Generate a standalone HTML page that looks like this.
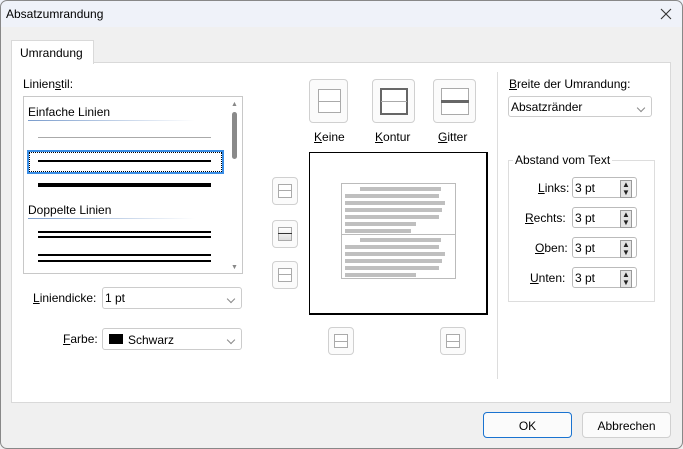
<!DOCTYPE html>
<html><head><meta charset="utf-8"><style>
*{box-sizing:border-box;margin:0;padding:0}
body{width:683px;height:449px;background:#f0f0f0;font-family:"Liberation Sans",sans-serif;font-size:12px;color:#000;position:relative;overflow:hidden}
.a{position:absolute}
.t{position:absolute;white-space:nowrap;font-size:12px;line-height:14px}
.btn{position:absolute;background:#fbfbfb;border:1px solid #d0d0d0;border-radius:4px}
.ib{position:absolute;border:1px solid #aaa;background:#fff}
.combo{position:absolute;background:#fff;border:1px solid #ccc;border-radius:3px}
.chev{position:absolute;right:7px;top:8px;width:6px;height:6px;border-right:1px solid #888;border-bottom:1px solid #888;transform:rotate(45deg)}
.spin{position:absolute;background:#fff;border:1px solid #bbb;border-radius:3px;width:65px;height:21px}
.bar{position:absolute;background:#bfbfbf;height:4px}
u{text-decoration:underline}
</style></head><body>
<div class="a" style="left:0;top:0;width:683px;height:27px;background:#eff2f9"></div>
<div class="t" style="left:6px;top:7px;font-size:12px">Absatzumrandung</div>
<svg class="a" style="left:660px;top:8px" width="12" height="12"><path d="M1 1L11 11M11 1L1 11" stroke="#333" stroke-width="1.1"/></svg>
<div class="a" style="left:0;top:0;width:683px;height:449px;border:1px solid #888;border-radius:7px;pointer-events:none"></div>

<div class="a" style="left:11px;top:62px;width:660px;height:341px;background:#fff;border:1px solid #d9d9d9"></div>
<div class="a" style="left:11px;top:40px;width:83px;height:24px;background:#fff;border:1px solid #d9d9d9;border-bottom:none"></div>
<div class="t" style="left:20px;top:46px">Umrandung</div>

<div class="t" style="left:23px;top:77px">Linien<u>s</u>til:</div>
<div class="a" style="left:23px;top:96px;width:220px;height:178px;border:1px solid #c8c8c8;background:#fff"></div>
<div class="a" style="left:229px;top:97px;width:13px;height:176px;background:#fff"></div>
<div class="t" style="left:231px;top:98px;font-size:7px;color:#888">▲</div>
<div class="t" style="left:231px;top:261px;font-size:7px;color:#888">▼</div>
<div class="a" style="left:232px;top:112px;width:5px;height:47px;background:#8a8a8a;border-radius:3px"></div>
<div class="t" style="left:28px;top:105px;font-size:12px">Einfache Linien</div>
<div class="a" style="left:28px;top:120px;width:167px;height:1px;background:linear-gradient(90deg,#7a9ccc,#fff)"></div>
<div class="a" style="left:38px;top:137px;width:173px;height:1px;background:#aaa"></div>
<div class="a" style="left:27px;top:150px;width:197px;height:24px;border:2px solid #3a8ee6"></div>
<div class="a" style="left:29px;top:152px;width:193px;height:20px;border:1px dotted #000"></div>
<div class="a" style="left:38px;top:160px;width:173px;height:2px;background:#000"></div>
<div class="a" style="left:38px;top:183px;width:173px;height:4px;background:#000"></div>
<div class="t" style="left:28px;top:203px">Doppelte Linien</div>
<div class="a" style="left:28px;top:218px;width:167px;height:1px;background:linear-gradient(90deg,#7a9ccc,#fff)"></div>
<div class="a" style="left:38px;top:231px;width:173px;height:2px;background:#000"></div>
<div class="a" style="left:38px;top:236px;width:173px;height:2px;background:#000"></div>
<div class="a" style="left:38px;top:254px;width:173px;height:2px;background:#000"></div>
<div class="a" style="left:38px;top:260px;width:173px;height:2px;background:#000"></div>

<div class="t" style="left:33px;top:291px"><u>L</u>iniendicke:</div>
<div class="combo" style="left:102px;top:287px;width:140px;height:22px"><span class="t" style="left:2px;top:3px">1 pt</span><span class="chev"></span></div>
<div class="t" style="left:63px;top:332px"><u>F</u>arbe:</div>
<div class="combo" style="left:102px;top:328px;width:140px;height:22px"><span class="a" style="left:6px;top:5px;width:14px;height:10px;background:#000"></span><span class="t" style="left:25px;top:4px">Schwarz</span><span class="chev"></span></div>

<div class="btn" style="left:309px;top:79px;width:39px;height:44px"><div class="ib" style="left:8px;top:9px;width:23px;height:24px;border-color:#aaa"></div><div class="a" style="left:8px;top:21px;width:23px;height:1px;background:#aaa"></div></div>
<div class="btn" style="left:372px;top:79px;width:43px;height:44px"><div class="ib" style="left:7px;top:8px;width:28px;height:27px;border:2px solid #666"></div><div class="a" style="left:8px;top:21px;width:26px;height:1px;background:#aaa"></div></div>
<div class="btn" style="left:433px;top:79px;width:43px;height:44px"><div class="ib" style="left:7px;top:8px;width:28px;height:27px"></div><div class="a" style="left:7px;top:20px;width:28px;height:3px;background:#666"></div></div>
<div class="t" style="left:314px;top:130px"><u>K</u>eine</div>
<div class="t" style="left:375px;top:130px"><u>K</u>ontur</div>
<div class="t" style="left:438px;top:130px"><u>G</u>itter</div>

<div class="a" style="left:309px;top:152px;width:179px;height:163px;border:1px solid #000;border-right-width:2px;border-bottom-width:2px;background:#fff"></div>
<div class="a" style="left:341px;top:183px;width:115px;height:96px;border:1px solid #bbb"></div>
<div class="a" style="left:341px;top:234px;width:115px;height:1px;background:#bbb"></div>
<div class="bar" style="left:360px;top:187px;width:81px"></div>
<div class="bar" style="left:345px;top:194px;width:94px"></div>
<div class="bar" style="left:345px;top:201px;width:100px"></div>
<div class="bar" style="left:345px;top:208px;width:97px"></div>
<div class="bar" style="left:345px;top:215px;width:94px"></div>
<div class="bar" style="left:345px;top:222px;width:71px"></div>
<div class="bar" style="left:345px;top:229px;width:66px"></div>
<div class="bar" style="left:360px;top:238px;width:81px"></div>
<div class="bar" style="left:345px;top:245px;width:94px"></div>
<div class="bar" style="left:345px;top:252px;width:100px"></div>
<div class="bar" style="left:345px;top:259px;width:97px"></div>
<div class="bar" style="left:345px;top:266px;width:94px"></div>
<div class="bar" style="left:345px;top:273px;width:71px"></div>

<div class="btn" style="left:272px;top:177px;width:26px;height:28px"><div class="ib" style="left:5px;top:6px;width:14px;height:14px"></div><div class="a" style="left:5px;top:12px;width:14px;height:1px;background:#aaa"></div></div>
<div class="btn" style="left:272px;top:220px;width:26px;height:28px"><div class="ib" style="left:5px;top:6px;width:14px;height:14px;background:linear-gradient(#fff,#ddd)"></div><div class="a" style="left:5px;top:12px;width:14px;height:1px;background:#333"></div></div>
<div class="btn" style="left:272px;top:261px;width:26px;height:28px"><div class="ib" style="left:5px;top:6px;width:14px;height:14px"></div><div class="a" style="left:5px;top:12px;width:14px;height:1px;background:#aaa"></div></div>
<div class="btn" style="left:328px;top:327px;width:26px;height:28px"><div class="ib" style="left:5px;top:6px;width:14px;height:14px"></div><div class="a" style="left:5px;top:13px;width:14px;height:1px;background:#aaa"></div></div>
<div class="btn" style="left:440px;top:327px;width:26px;height:28px"><div class="ib" style="left:5px;top:6px;width:14px;height:14px"></div><div class="a" style="left:5px;top:13px;width:14px;height:1px;background:#aaa"></div></div>

<div class="a" style="left:497px;top:72px;width:1px;height:307px;background:#ddd"></div>

<div class="t" style="left:509px;top:77px"><u>B</u>reite der Umrandung:</div>
<div class="combo" style="left:508px;top:96px;width:144px;height:21px"><span class="t" style="left:2px;top:3px">Absatzränder</span><span class="chev"></span></div>
<div class="a" style="left:508px;top:160px;width:147px;height:142px;border:1px solid #ddd"></div>
<div class="t" style="left:513px;top:153px;background:#fff;padding:0 2px">Abstand vom Text</div>
<div class="t" style="left:538px;top:181px"><u>L</u>inks:</div>
<div class="t" style="left:525px;top:211px"><u>R</u>echts:</div>
<div class="t" style="left:535px;top:241px"><u>O</u>ben:</div>
<div class="t" style="left:530px;top:271px"><u>U</u>nten:</div>
<div class="spin" style="left:572px;top:177px"><span class="t" style="left:2px;top:3px">3 pt</span><span class="t" style="left:47px;top:2px;font-size:8px;line-height:8px;color:#222;background:#e4e4e4;border:1px solid #999;padding:0 1px">▲<br>▼</span></div>
<div class="spin" style="left:572px;top:207px"><span class="t" style="left:2px;top:3px">3 pt</span><span class="t" style="left:47px;top:2px;font-size:8px;line-height:8px;color:#222;background:#e4e4e4;border:1px solid #999;padding:0 1px">▲<br>▼</span></div>
<div class="spin" style="left:572px;top:237px"><span class="t" style="left:2px;top:3px">3 pt</span><span class="t" style="left:47px;top:2px;font-size:8px;line-height:8px;color:#222;background:#e4e4e4;border:1px solid #999;padding:0 1px">▲<br>▼</span></div>
<div class="spin" style="left:572px;top:267px"><span class="t" style="left:2px;top:3px">3 pt</span><span class="t" style="left:47px;top:2px;font-size:8px;line-height:8px;color:#222;background:#e4e4e4;border:1px solid #999;padding:0 1px">▲<br>▼</span></div>

<div class="btn" style="left:483px;top:412px;width:89px;height:26px;border-color:#1a73d0"><span class="t" style="left:0;width:87px;text-align:center;top:6px">OK</span></div>
<div class="btn" style="left:582px;top:412px;width:89px;height:26px"><span class="t" style="left:0;width:87px;text-align:center;top:6px">Abbrechen</span></div>
</body></html>
